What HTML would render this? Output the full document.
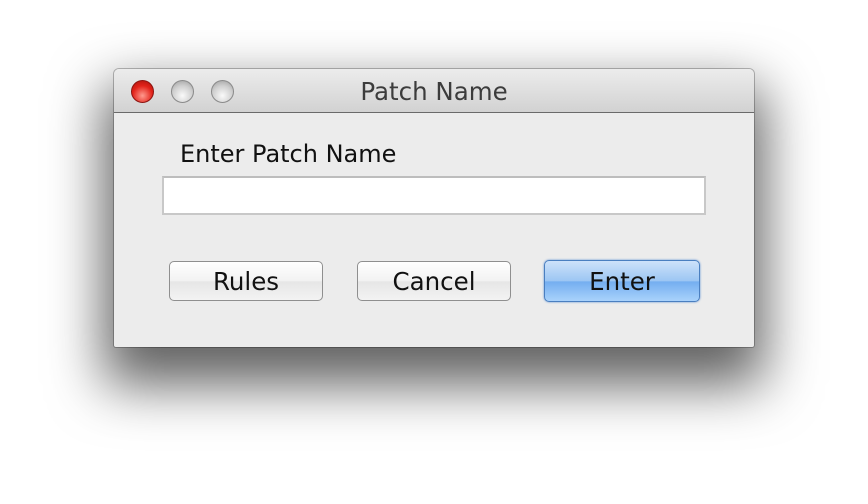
<!DOCTYPE html>
<html><head><style>
body{margin:0;width:868px;height:504px;background:#fff;overflow:hidden;position:relative;font-family:"DejaVu Sans","Liberation Sans",sans-serif;}
.win{position:absolute;left:114px;top:69px;width:640px;height:278px;background:#ececec;border-radius:5px 5px 2px 2px;box-shadow:0 28px 55px 10px rgba(0,0,0,0.62),0 0 0 1px rgba(0,0,0,0.25);overflow:hidden;}
.tb{position:absolute;left:0;top:0;width:640px;height:43px;background:linear-gradient(#ececec,#d2d2d2);border-bottom:1px solid #6a6a6a;}
.tl{position:absolute;top:11px;width:23px;height:23px;border-radius:50%;box-sizing:border-box;}
.r{left:17px;background:radial-gradient(circle at 50% 70%,#ff9a8e,#e2231a 55%,#a8120c);border:1px solid #8c1410;}
.g{background:radial-gradient(circle at 50% 70%,#fafafa,#cfcfcf 55%,#9a9a9a);border:1px solid #8a8a8a;}
.title{position:absolute;left:0;width:640px;top:8px;text-align:center;font-size:24.5px;color:#3c3c3c;}
.lbl{position:absolute;left:66px;top:71px;font-size:24px;color:#111;}
.inp{position:absolute;left:48px;top:107px;width:544px;height:39px;box-sizing:border-box;background:#fff;border:2px solid #c8c8c8;border-top-color:#bdbdbd;}
.btn{position:absolute;top:192px;height:40px;box-sizing:border-box;border:1px solid #8f8f8f;border-radius:5px;background:linear-gradient(#ffffff,#f2f2f2 50%,#e6e6e6 52%,#f3f3f3);text-align:center;font-size:24.5px;line-height:39px;color:#111;}
.en{border-color:#4a7fc0;background:linear-gradient(#cde2fa,#9cc6f3 50%,#74aef0 52%,#a9d2fb);box-shadow:0 0 2px #5d8fd3;}
</style></head><body>
<div class="win">
<div class="tb">
<div class="tl r"></div><div class="tl g" style="left:57px"></div><div class="tl g" style="left:97px"></div>
<div class="title">Patch Name</div>
</div>
<div class="lbl">Enter Patch Name</div>
<div class="inp"></div>
<div class="btn" style="left:55px;width:154px">Rules</div>
<div class="btn" style="left:243px;width:154px">Cancel</div>
<div class="btn en" style="left:430px;width:156px;top:191px;height:42px;line-height:41px">Enter</div>
</div>
</body></html>
